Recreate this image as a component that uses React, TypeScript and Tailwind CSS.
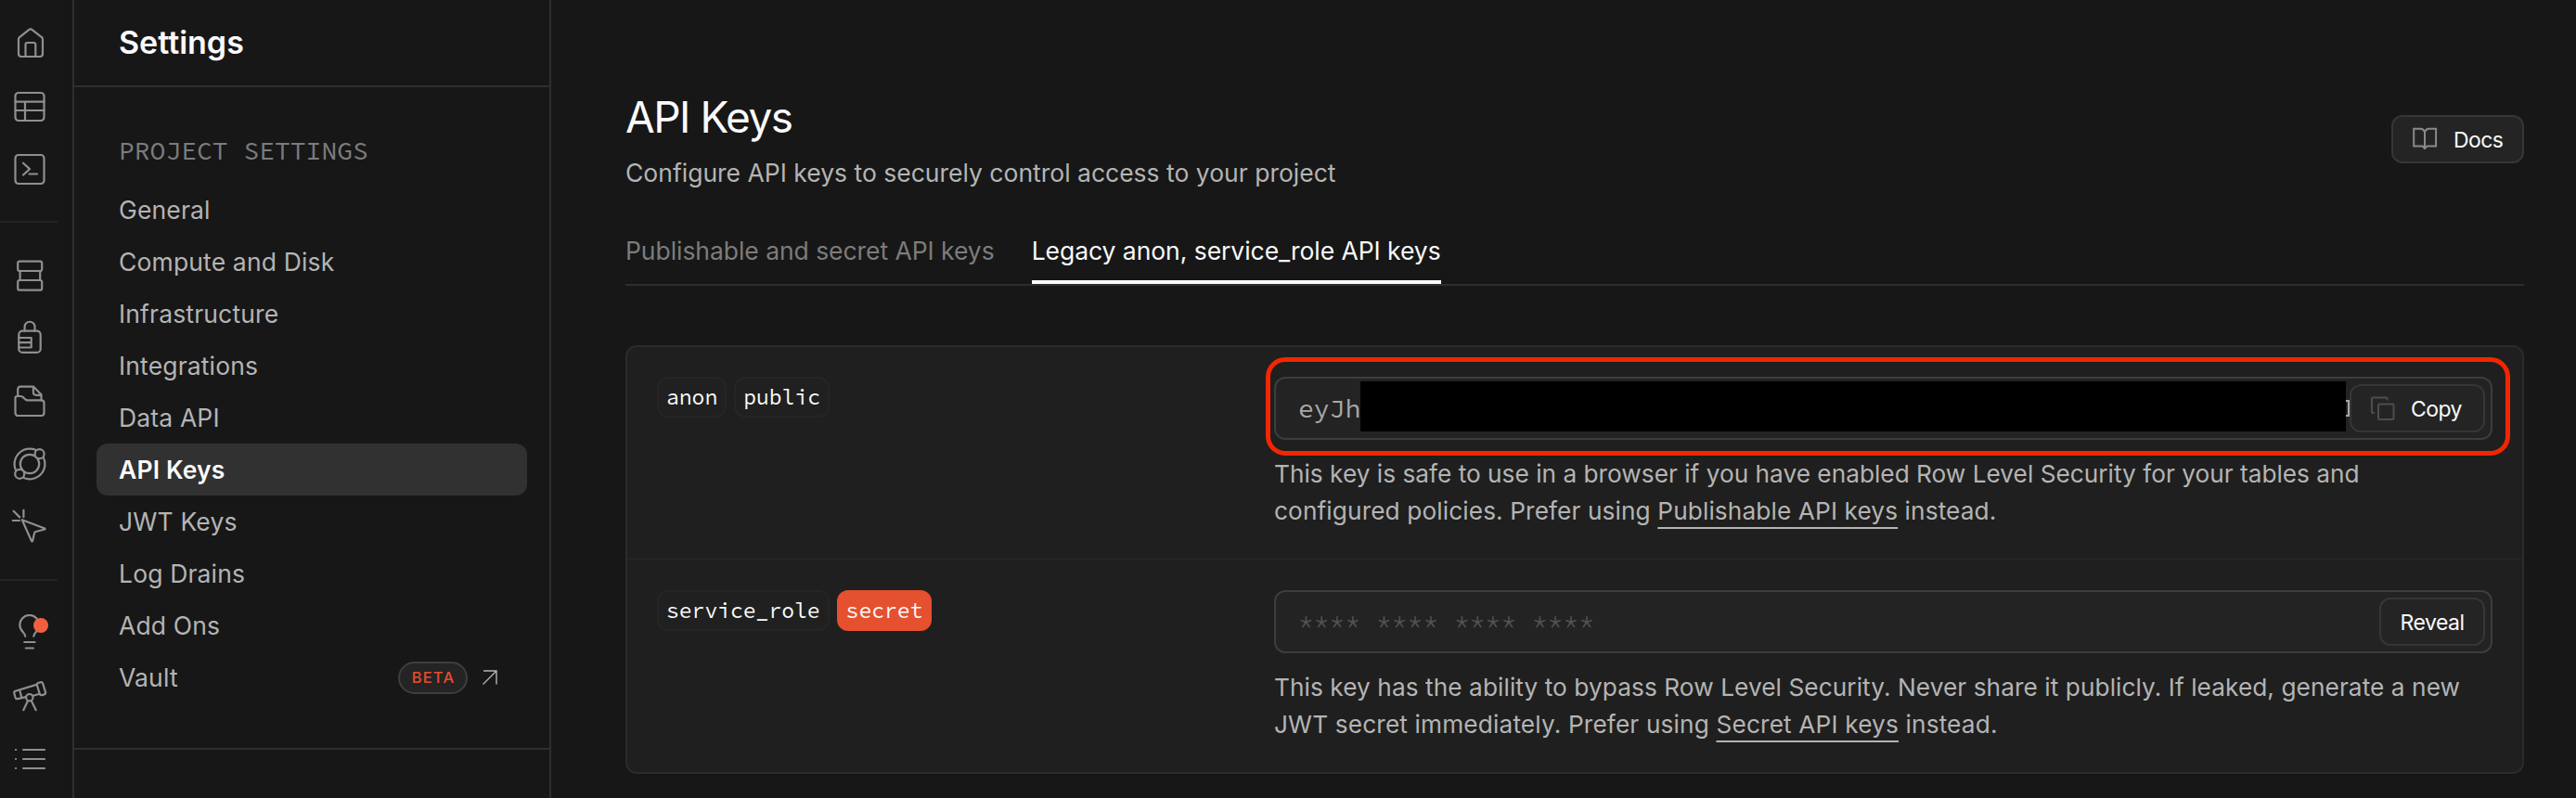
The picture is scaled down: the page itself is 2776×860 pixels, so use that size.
import React from 'react';

interface MenuItem {
  label: string;
  active?: boolean;
  beta?: boolean;
}

const menuItems: MenuItem[] = [
  { label: 'General' },
  { label: 'Compute and Disk' },
  { label: 'Infrastructure' },
  { label: 'Integrations' },
  { label: 'Data API' },
  { label: 'API Keys', active: true },
  { label: 'JWT Keys' },
  { label: 'Log Drains' },
  { label: 'Add Ons' },
  { label: 'Vault', beta: true },
];

const RailIcon = ({ children }: { children: React.ReactNode }) => (
  <div className="h-[68px] flex items-center pl-3">
    <svg
      viewBox="0 0 40 40"
      className="w-10 h-10 shrink-0"
      fill="none"
      stroke="#8f8f8f"
      strokeWidth="2.2"
      strokeLinecap="round"
      strokeLinejoin="round"
    >
      {children}
    </svg>
  </div>
);

const Rail = () => (
  <nav className="w-20 shrink-0 border-r-2 border-[#2e2e2e] pt-3">
    <RailIcon>
      <path d="M8 16.3a3 3 0 0 1 1.4-2.5l9.7-7.6a2.8 2.8 0 0 1 3.6 0l9.9 7.6a3 3 0 0 1 1.4 2.5V32a3 3 0 0 1-3 3H11a3 3 0 0 1-3-3z" />
      <path d="M15.5 35V22a2 2 0 0 1 2-2h6.8a2 2 0 0 1 2 2v13" />
    </RailIcon>
    <RailIcon>
      <rect x="4.5" y="6" width="31" height="30" rx="3.5" />
      <path d="M4.5 15.7h31M4.5 25h31M15 15.7V36" />
    </RailIcon>
    <RailIcon>
      <rect x="4.5" y="5" width="31" height="31" rx="3.5" />
      <path d="M13 13.7l7 6.4-7 6.4M19.5 25.5H28" />
    </RailIcon>

    <div className="w-[62px] h-0.5 bg-[#242424] my-[22px]" />

    <RailIcon>
      <rect x="7.2" y="5.7" width="26" height="10.3" rx="2" />
      <rect x="7.2" y="26" width="26" height="10.7" rx="2" />
      <path d="M9.6 16v10M31.2 16v10" />
    </RailIcon>
    <RailIcon>
      <rect x="8.3" y="12.7" width="23.4" height="23.2" rx="4" />
      <path d="M14.6 12.7V8.2a5.4 5.4 0 0 1 10.9 0v4.5M8.3 20h13.4v10.5H8.3M8.3 25.2h13.4" />
    </RailIcon>
    <RailIcon>
      <path d="M7.2 15V7.2a2.5 2.5 0 0 1 2.5-2.5h14.4l8.4 8.6v6M23.9 4.7v6.1a3 3 0 0 0 3 3h5.6" />
      <path d="M4.5 17a2 2 0 0 1 2-2h3.6c1.2 0 1.9.4 2.7 1.1l2.4 2.2c.8.7 1.5 1 2.7 1h14.6a3 3 0 0 1 3 3V33a3 3 0 0 1-3 3h-25a3 3 0 0 1-3-3z" />
    </RailIcon>
    <RailIcon>
      <circle cx="20" cy="20" r="16.4" />
      <circle cx="20" cy="20" r="10.2" />
      <circle cx="30.6" cy="9.2" r="5" fill="#171717" />
      <circle cx="9.2" cy="30.8" r="5" fill="#171717" />
    </RailIcon>
    <RailIcon>
      <path d="M11.8 12.2l24.4 9.3c.5.2.5.9 0 1L26.5 25c-.8.2-1.2.6-1.4 1.4l-2 8.6c-.2.6-.9.6-1.1.1z" />
      <path d="M2.6 2.8l6.6 6.6M13.4 1.8v7.4M1.8 13H9" />
    </RailIcon>

    <div className="w-[62px] h-0.5 bg-[#242424] my-[22px]" />

    <RailIcon>
      <path d="M15.2 23.6c-.3-1.6-1-2.9-2.4-4.5a10.4 10.4 0 1 1 13.9 0c-1.4 1.6-2.1 2.9-2.4 4.5M14.2 30h11.4M15.8 36.5h8.2" />
      <circle cx="32" cy="12" r="8" fill="#f0603f" stroke="none" />
    </RailIcon>
    <RailIcon>
      <path d="M28 7.6L4.6 14.8a2 2 0 0 0-1.3 2.4l1.3 4.6a2 2 0 0 0 2.4 1.3l9-2M31 17.8l-7.5 2M9.2 13.6l2 8.2" />
      <path d="M29.2 6l2.4-.8a2 2 0 0 1 2.5 1.3l2.9 9.4a2 2 0 0 1-1.3 2.5l-2.5.7a2 2 0 0 1-2.4-1.3L27.9 8.4A2 2 0 0 1 29.2 6z" />
      <circle cx="19.8" cy="21.7" r="3.7" />
      <path d="M18 25.2l-4.7 10M21.8 25.2l4.9 10" />
    </RailIcon>
    <RailIcon>
      <path d="M5 10h.1M5 20h.1M5 30h.1M13 10h23M13 20h23M13 30h23" />
    </RailIcon>
  </nav>
);

const Sidebar = () => (
  <aside className="w-[514px] shrink-0 border-r-2 border-[#2e2e2e]">
    <div className="h-[94px] border-b-2 border-[#2e2e2e] flex items-center pl-12 pb-0.5">
      <h2 className="text-[34px] font-semibold text-[#fafafa]">Settings</h2>
    </div>
    <div className="px-6 pt-12 pb-12 border-b-2 border-[#2e2e2e]">
      <div className="pl-6 mb-4 text-[28px] leading-10 text-[#7c7c7c] font-[Source_Code_Pro,Liberation_Mono,monospace]">
        PROJECT SETTINGS
      </div>
      <ul>
        {menuItems.map(item => (
          <li
            key={item.label}
            className={`h-14 px-6 flex items-center rounded-xl text-[26.5px] tracking-[0.15px] ${
              item.active ? 'bg-[#313131] text-[#fafafa] font-semibold' : 'text-[#b4b4b4]'
            }`}
          >
            <span className="pt-0.5">{item.label}</span>
            {item.beta && (
              <span className="ml-auto mr-2 flex items-center gap-4">
                <span className="w-[75px] h-[35px] pl-px rounded-full border-2 border-[#3e3e3e] bg-[#242424] text-[#e54d2e] text-[16.5px] font-medium tracking-[1.2px] flex items-center justify-center">
                  BETA
                </span>
                <svg viewBox="0 0 16 16" className="w-4 h-4" fill="none" stroke="#b4b4b4" strokeWidth="1.4">
                  <path d="M0.5 15.5L15 1M1 1H15V15.5" />
                </svg>
              </span>
            )}
          </li>
        ))}
      </ul>
    </div>
  </aside>
);

const Badge = ({ label, danger }: { label: string; danger?: boolean }) => (
  <span
    className={`h-11 px-2 rounded-xl border-2 flex items-center text-[23px] font-[Source_Code_Pro,Liberation_Mono,monospace] text-[#fafafa] ${
      danger ? 'bg-[#e5502f] border-[#e5502f]' : 'bg-[#202020] border-[#252525]'
    }`}
  >
    {label}
  </span>
);

const DocsButton = () => (
  <button className="w-[143px] h-[52px] -mt-0.5 pl-5 flex items-center gap-[17px] rounded-xl border-2 border-[#363636] bg-[#242424] text-[#fafafa] text-[23px] tracking-[-0.6px]">
    <svg viewBox="0 0 28 28" className="w-7 h-7" fill="none" stroke="#8a8a8a" strokeWidth="2">
      <path d="M14 6C13 3.8 11.8 2.8 9.5 2.8H2.2v18.6h8.4c1.8 0 3 1 3.4 3.4M14 6c1-2.2 2.2-3.2 4.5-3.2h7.6v18.6h-8.7c-1.8 0-3 1-3.4 3.4M14 6v19" />
    </svg>
    <span className="pt-0.5">Docs</span>
  </button>
);

const App = () => {
  return (
    <div className="h-[860px] w-[2776px] flex overflow-hidden bg-[#171717] font-[Inter,sans-serif]">
      <Rail />
      <Sidebar />

      <main className="flex-1 pl-20 pr-14 pt-24">
        <div className="h-[110px] flex items-center justify-between">
          <div>
            <h1 className="text-[46px] leading-[60px] tracking-[-1.5px] text-[#fafafa]">API Keys</h1>
            <p className="mt-2.5 text-[26.5px] leading-10 text-[#b4b4b4]">
              Configure API keys to securely control access to your project
            </p>
          </div>
          <DocsButton />
        </div>

        <div className="mt-11 flex gap-10 border-b-2 border-[#2e2e2e] text-[26.5px] leading-10 tracking-[-0.05px]">
          <div className="pb-4 text-[#7c7c7c]">Publishable and secret API keys</div>
          <div className="pb-3 border-b-4 border-[#fafafa] text-[#fafafa]">Legacy anon, service_role API keys</div>
        </div>

        <div className="mt-16 rounded-xl border-2 border-[#2b2b2b] bg-[#1f1f1f]">
          <div className="p-8 flex justify-between items-start border-b-2 border-[#242424]">
            <div className="flex gap-2">
              <Badge label="anon" />
              <Badge label="public" />
            </div>
            <div className="w-[1313px]">
              <div className="relative h-[68px] pl-6 pr-1.5 flex items-center rounded-xl border-2 border-[#3d3d3d] bg-[#232323] text-[28px] font-[Source_Code_Pro,Liberation_Mono,monospace] text-[#a8a8a8]">
                <span className="w-[67px]">eyJh</span>
                <div className="flex-1 self-start mt-[3px] h-[54px] bg-black" />
                {/* last visible bit of the key next to the button */}
                <div className="w-1 h-[18px] border-y-2 border-r-2 border-[#a8a8a8]" />
                <button className="w-[146px] h-[52px] pl-5 flex items-center gap-4 rounded-xl border-2 border-[#363636] bg-[#242424] font-[Inter,sans-serif] text-[23px] tracking-[-0.6px] text-[#fafafa]">
                  <svg viewBox="0 0 28 28" className="w-7 h-7" fill="none" stroke="#4d4d4d" strokeWidth="2" strokeLinejoin="round">
                    <rect x="9" y="9.5" width="16.5" height="16.5" rx="1" />
                    <path d="M18.5 5.5V3.5a1 1 0 0 0-1-1H3a1 1 0 0 0-1 1V18a1 1 0 0 0 1 1h2" />
                  </svg>
                  <span className="pt-0.5">Copy</span>
                </button>
                {/* highlight around the key field */}
                <div className="absolute -left-[11px] -right-[21px] -top-[23px] -bottom-[19px] rounded-[21px] border-[5px] border-[#f12602]" />
              </div>
              <p className="mt-[17px] -mb-px text-[26.25px] leading-10 text-[#b4b4b4]">
                <span className="block">
                  This key is safe to use in a browser if you have enabled Row Level Security for your tables and
                </span>
                <span className="block tracking-[0.1px]">
                  configured policies. Prefer using{' '}
                  <a className="underline decoration-2 underline-offset-8 [text-decoration-skip-ink:none]">Publishable API keys</a> instead.
                </span>
              </p>
            </div>
          </div>

          <div className="p-8 flex justify-between items-start">
            <div className="flex gap-2">
              <Badge label="service_role" />
              <Badge label="secret" danger />
            </div>
            <div className="w-[1313px]">
              <div className="h-[68px] pl-6 pr-1.5 flex items-center justify-between rounded-xl border-2 border-[#3d3d3d] bg-[#232323] text-[28px] font-[Source_Code_Pro,Liberation_Mono,monospace] text-[#505050]">
                <span>**** **** **** ****</span>
                <button className="w-[114px] h-[52px] flex items-center justify-center rounded-xl border-2 border-[#363636] bg-[#242424] font-[Inter,sans-serif] text-[23px] tracking-[-0.5px] text-[#fafafa]">
                  <span className="pt-0.5">Reveal</span>
                </button>
              </div>
              <p className="mt-[17px] -mb-px text-[26.25px] leading-10 text-[#b4b4b4]">
                <span className="block tracking-[0.06px]">
                  This key has the ability to bypass Row Level Security. Never share it publicly. If leaked, generate a new
                </span>
                <span className="block tracking-[0.14px]">
                  JWT secret immediately. Prefer using{' '}
                  <a className="underline decoration-2 underline-offset-8 [text-decoration-skip-ink:none]">Secret API keys</a> instead.
                </span>
              </p>
            </div>
          </div>
        </div>
      </main>
    </div>
  );
};

export default App;
